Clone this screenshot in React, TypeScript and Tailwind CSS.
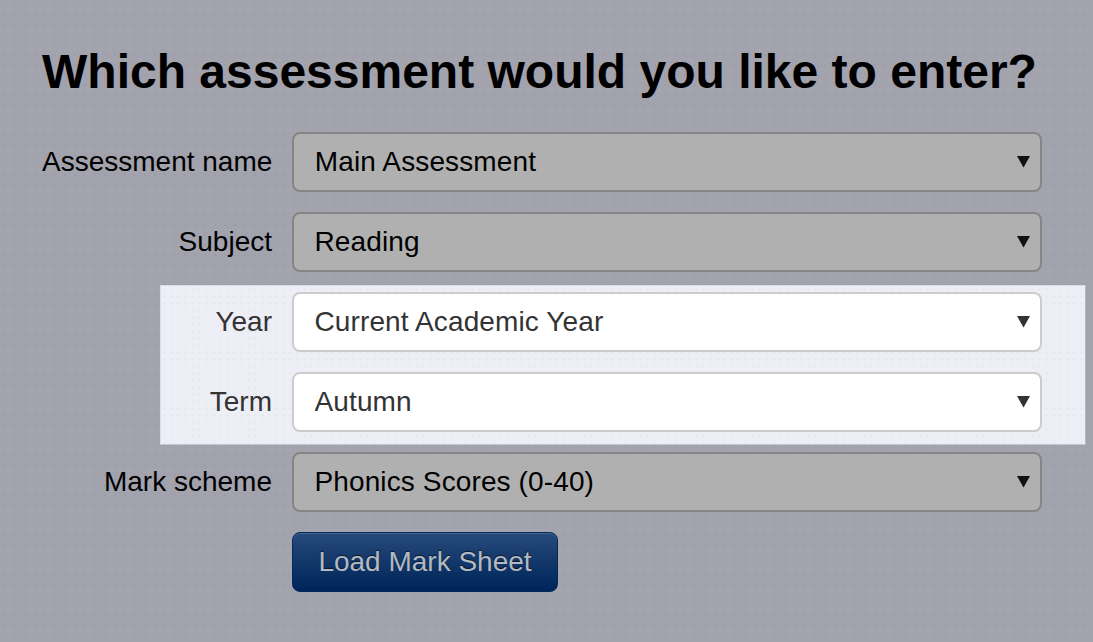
const dots =
  "bg-[#a3a3ae] bg-[radial-gradient(#9d9da9_1px,transparent_1.2px),radial-gradient(#a8a8b3_1px,transparent_1.2px)] bg-[length:10px_10px] bg-[position:0_0,5px_5px]";

function SelectRow({
  label,
  value,
  active = false,
  className = "",
}: {
  label: string;
  value: string;
  active?: boolean;
  className?: string;
}) {
  return (
    <div className={`flex items-center ${className}`}>
      <label className={`flex-1 text-right whitespace-nowrap text-[28px] leading-[58px] pr-5 ${active ? "text-[#333333]" : "text-black"}`}>{label}</label>
      <div className="relative w-[750px]">
        <select
          defaultValue={value}
          className={`block w-full h-[60px] appearance-none rounded-[8px] border-2 pl-[20.5px] pb-[1px] text-[28px] tracking-[0.12px] outline-none ${
            active ? "bg-white border-[#cccccc] text-[#333333]" : "bg-[#b0b0b0] border-[#858585] text-black"
          }`}
        >
          <option>{value}</option>
        </select>
        <svg className="absolute right-[12px] top-[24px] pointer-events-none" width="13" height="12" viewBox="0 0 13 12">
          <path d="M0 0h13L6.5 11.5z" fill={active ? "#333333" : "#111111"} />
        </svg>
      </div>
    </div>
  );
}

export default function App() {
  return (
    <div className={`w-[1093px] h-[642px] overflow-hidden pl-[42px] pt-[39px] font-['Liberation_Sans',Arial,sans-serif] ${dots}`}>
      <div className="w-[1000px]">
        <h1 className="text-[48px] leading-[66px] font-bold text-black mb-[27px] whitespace-nowrap">
          Which assessment would you like to enter?
        </h1>
        <SelectRow label="Assessment name" value="Main Assessment" className="mb-5" />
        <SelectRow label="Subject" value="Reading" className="mb-5" />
        <div className="-mt-[7px] ml-[118px] -mr-[44px] pt-[6px] pb-[12px] pr-[43px] mb-[7px] border border-t-[#dcdce8] border-l-[#dcdce8] border-r-[#b4b4c2] border-b-[#c4c4d2] bg-[#eeeef6] bg-[radial-gradient(#e8e8f1_1px,transparent_1.2px)] bg-[length:7px_7px]">
          <SelectRow label="Year" value="Current Academic Year" active className="mb-5" />
          <SelectRow label="Term" value="Autumn" active />
        </div>
        <SelectRow label="Mark scheme" value="Phonics Scores (0-40)" className="mb-5" />
        <div className="pl-[250px]">
          <button className="h-[60px] w-[266px] pb-[1px] rounded-[8px] border border-[#002a5c] bg-gradient-to-b from-[#264a7a] to-[#002459] text-[28px] text-[#b3b9c2] [text-shadow:0_-1px_1px_rgba(0,0,0,0.6)] shadow-[inset_0_1px_0_rgba(255,255,255,0.15)]">
            Load Mark Sheet
          </button>
        </div>
      </div>
    </div>
  );
}
